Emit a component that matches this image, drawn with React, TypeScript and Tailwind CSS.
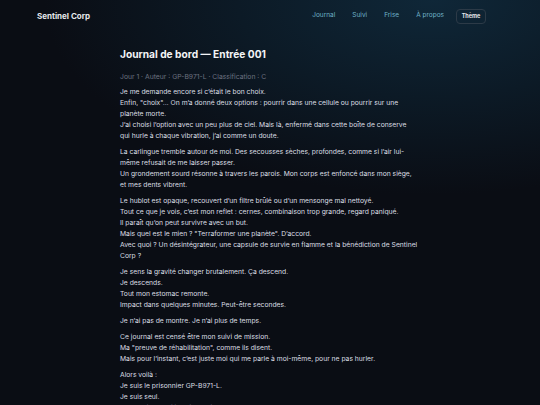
// each entry is a paragraph, each string a displayed line
const paragraphs: string[][] = [
  [
    'Je me demande encore si c\u2019était le bon choix.',
    'Enfin, "choix"… On m\u2019a donné deux options : pourrir dans une cellule ou pourrir sur une',
    'planète morte.',
    'J\u2019ai choisi l\u2019option avec un peu plus de ciel. Mais là, enfermé dans cette boîte de conserve',
    'qui hurle à chaque vibration, j\u2019ai comme un doute.',
  ],
  [
    'La carlingue tremble autour de moi. Des secousses sèches, profondes, comme si l\u2019air lui-',
    'même refusait de me laisser passer.',
    'Un grondement sourd résonne à travers les parois. Mon corps est enfoncé dans mon siège,',
    'et mes dents vibrent.',
  ],
  [
    'Le hublot est opaque, recouvert d\u2019un filtre brûlé ou d\u2019un mensonge mal nettoyé.',
    'Tout ce que je vois, c\u2019est mon reflet : cernes, combinaison trop grande, regard paniqué.',
    'Il paraît qu\u2019on peut survivre avec un but.',
    'Mais quel est le mien ? "Terraformer une planète". D\u2019accord.',
    'Avec quoi ? Un désintégrateur, une capsule de survie en flamme et la bénédiction de Sentinel',
    'Corp ?',
  ],
  [
    'Je sens la gravité changer brutalement. Ça descend.',
    'Je descends.',
    'Tout mon estomac remonte.',
    'Impact dans quelques minutes. Peut-être secondes.',
  ],
  ['Je n\u2019ai pas de montre. Je n\u2019ai plus de temps.'],
  [
    'Ce journal est censé être mon suivi de mission.',
    'Ma "preuve de réhabilitation", comme ils disent.',
    'Mais pour l\u2019instant, c\u2019est juste moi qui me parle à moi-même, pour ne pas hurler.',
  ],
  [
    'Alors voilà :',
    'Je suis le prisonnier GP-B971-L.',
    'Je suis seul.',
    'Je ne sais pas si je vais survivre.',
  ],
];

export default function App() {
  return (
    <div className="h-[405px] overflow-hidden bg-[#0a0d14] bg-[radial-gradient(ellipse_90%_60%_at_80%_0%,#0f2738_0%,#0c1a26_40%,#0a0d14_80%)] font-['Inter','Liberation_Sans',sans-serif]">
      <header className="flex items-center justify-between pl-[37px] pr-[54px] h-[32px]">
        <span className="text-[8px] font-bold text-[#e5e7eb]">Sentinel Corp</span>
        <nav className="flex items-center gap-[17px] text-[6.5px] text-[#6fb3c9]">
          <a>Journal</a>
          <a>Suivi</a>
          <a>Frise</a>
          <a>À propos</a>
          <button className="-ml-[5px] h-[15px] w-[30px] rounded-[4px] border border-[#2c3a47] text-[5.5px] font-bold text-[#e5e7eb]">
            Thème
          </button>
        </nav>
      </header>

      <main className="w-[300px] mx-auto pt-[15px]">
        <h1 className="text-[10.2px] leading-[14px] font-bold text-[#f3f4f6]">
          Journal de bord — Entrée 001
        </h1>
        <p className="mt-[10px] text-[6.8px] leading-[11px] text-[#6b7280]">
          Jour 1 · Auteur : GP-B971-L · Classification : C
        </p>
        <div className="mt-[4px] flex flex-col gap-[5px] text-[6.75px] leading-[11px] text-[#dcdfe4]">
          {paragraphs.map((lines, i) => (
            <p key={i}>
              {lines.map((l, j) => (
                <span key={j} className="block whitespace-nowrap">
                  {l}
                </span>
              ))}
            </p>
          ))}
        </div>
      </main>
    </div>
  );
}
